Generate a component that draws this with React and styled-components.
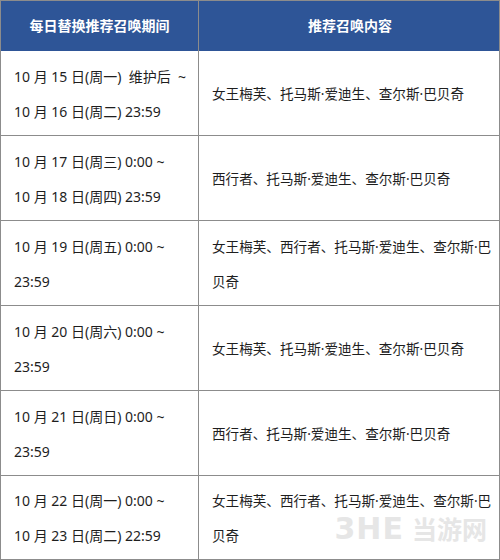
import React from 'react';
import styled, { createGlobalStyle } from 'styled-components';

const GlobalStyle = createGlobalStyle`
    html, body {
        margin: 0;
        padding: 0;
        background: #ffffff;
    }
    body {
        font-family: "Noto Sans", "Noto Sans CJK SC", sans-serif;
    }
`

const Sheet = styled.div`
    position: relative;
    width: 500px;
    height: 560px;
    box-sizing: border-box;
    border: 1px solid #8c8c8c;
    border-bottom: none;
    display: grid;
    grid-template-columns: 198px 1fr;
    grid-template-rows: 50px repeat(5, 85px) 84px;
    overflow: hidden;
`

const HeadCell = styled.div`
    background: #2e5597;
    color: #ffffff;
    font-weight: 700;
    font-size: 14px;
    display: flex;
    align-items: center;
    justify-content: center;
    border-right: ${props => (props.last ? "none" : "1px solid #8c8c8c")};
    padding-bottom: 2px;
    box-sizing: border-box;
`

const Cell = styled.div`
    box-sizing: border-box;
    border-bottom: 1px solid #8c8c8c;
    border-right: ${props => (props.last ? "none" : "1px solid #8c8c8c")};
    padding: 1px 10px 0 13px;
    display: flex;
    flex-direction: column;
    justify-content: center;
    font-size: ${props => (props.last ? "13.6px" : "14px")};
    line-height: 35px;
    color: #1e1e1e;
`

const Line = styled.span`
    display: block;
    white-space: pre;
`

const Watermark = styled.div`
    position: absolute;
    right: 12px;
    bottom: 14px;
    display: flex;
    align-items: center;
    gap: 8px;
    color: #e6e6e6;
    pointer-events: none;
`

const MarkLogo = styled.span`
    font-family: "DejaVu Sans", sans-serif;
    font-weight: 700;
    font-size: 30px;
    letter-spacing: 1px;
`

const MarkName = styled.span`
    font-family: "Noto Sans CJK SC", sans-serif;
    font-weight: 700;
    font-size: 25px;
`

const rows = [
    {
        period: ["10 月 15 日(周一)  维护后  ~", "10 月 16 日(周二) 23:59"],
        content: ["女王梅芙、托马斯·爱迪生、查尔斯·巴贝奇"],
    },
    {
        period: ["10 月 17 日(周三) 0:00 ~", "10 月 18 日(周四) 23:59"],
        content: ["西行者、托马斯·爱迪生、查尔斯·巴贝奇"],
    },
    {
        period: ["10 月 19 日(周五) 0:00 ~", "23:59"],
        content: ["女王梅芙、西行者、托马斯·爱迪生、查尔斯·巴", "贝奇"],
    },
    {
        period: ["10 月 20 日(周六) 0:00 ~", "23:59"],
        content: ["女王梅芙、托马斯·爱迪生、查尔斯·巴贝奇"],
    },
    {
        period: ["10 月 21 日(周日) 0:00 ~", "23:59"],
        content: ["西行者、托马斯·爱迪生、查尔斯·巴贝奇"],
    },
    {
        period: ["10 月 22 日(周一) 0:00 ~", "10 月 23 日(周二) 22:59"],
        content: ["女王梅芙、西行者、托马斯·爱迪生、查尔斯·巴", "贝奇"],
    },
];

export default function App() {
    return (
        <>
            <GlobalStyle />
            <Sheet>
                <HeadCell>每日替换推荐召唤期间</HeadCell>
                <HeadCell last>推荐召唤内容</HeadCell>
                {rows.map((row, i) => (
                    <React.Fragment key={i}>
                        <Cell>
                            {row.period.map((text, j) => <Line key={j}>{text}</Line>)}
                        </Cell>
                        <Cell last>
                            {row.content.map((text, j) => <Line key={j}>{text}</Line>)}
                        </Cell>
                    </React.Fragment>
                ))}
                <Watermark>
                    <MarkLogo>3HE</MarkLogo>
                    <MarkName>当游网</MarkName>
                </Watermark>
            </Sheet>
        </>
    );
}
